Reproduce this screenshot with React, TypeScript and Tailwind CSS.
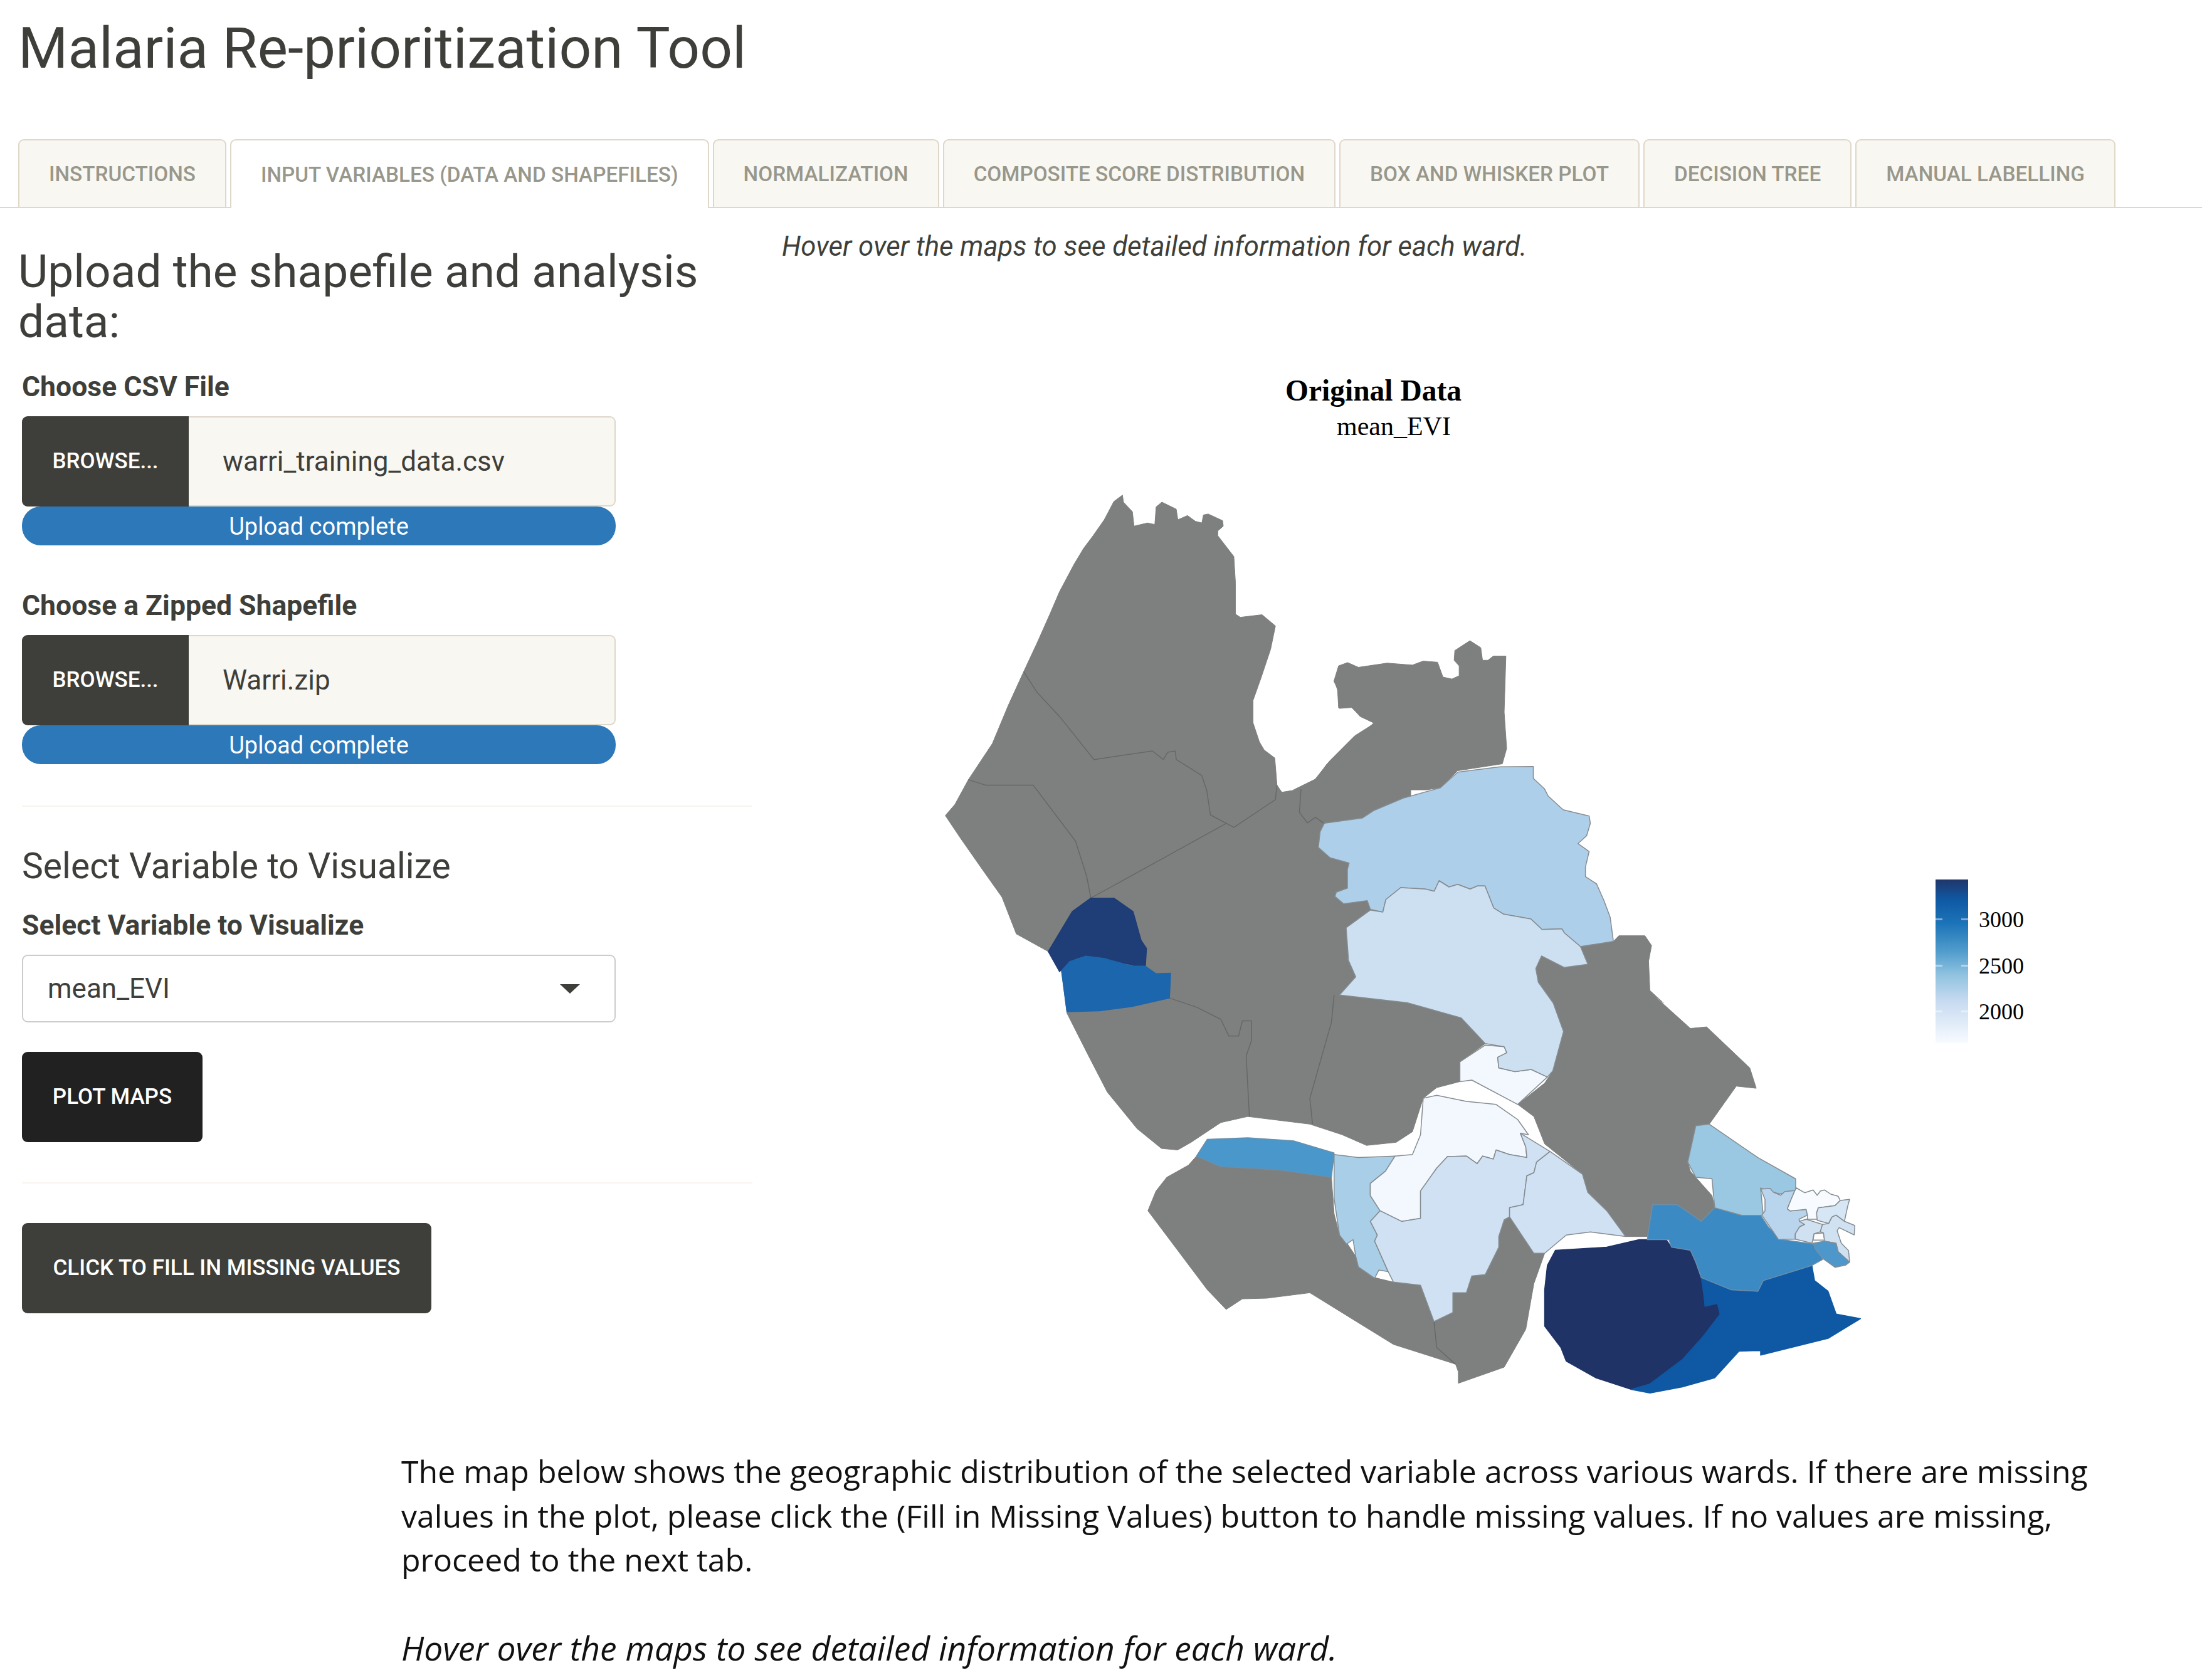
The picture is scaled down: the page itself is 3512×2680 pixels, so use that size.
const tabs = [
  "Instructions",
  "Input Variables (Data and Shapefiles)",
  "Normalization",
  "Composite Score Distribution",
  "Box and Whisker Plot",
  "Decision Tree",
  "Manual Labelling",
];

// each zoom crop of the map has its own origin and scale
type Frame = { x: number; y: number; sx: number; sy: number };
const N: Frame = { x: 1450, y: 750, sx: 1.96, sy: 1.96 };
const S: Frame = { x: 1650, y: 1500, sx: 1.1615, sy: 2.063 };
const E: Frame = { x: 2000, y: 560, sx: 1.742, sy: 2.24 };
const C: Frame = { x: 2060, y: 1200, sx: 2.529, sy: 3 };
const K: Frame = { x: 2760, y: 1870, sx: 3, sy: 3 };

function pts(...parts: [Frame, string][]) {
  return parts
    .map(([f, s]) =>
      s
        .trim()
        .split(/\s+/)
        .map((p) => {
          const [a, b] = p.split(",").map(Number);
          return `${(f.x + a / f.sx).toFixed(1)},${(f.y + b / f.sy).toFixed(1)}`;
        })
        .join(" ")
    )
    .join(" ");
}

const GRAY = "#7e807f";

const grayWards: [Frame, string][][] = [
  [[N, "667,78 670,100 698,130 703,175 745,165 768,170 772,115 790,100 835,122 840,155 870,142 895,160 915,165 920,140 935,137 980,158 982,175 965,190 965,205 1015,270 1020,350 1020,450 1035,460 1103,452 1145,487 1130,560 1100,650 1075,720 1075,790 1095,850 1110,875 1143,900 1150,985 1165,1007 1225,997 1270,970 1305,920 1370,855 1425,815 1453,790 1410,770 1385,742 1345,745 1340,690 1330,660 1345,615 1370,603 1405,618 1568,620 1568,1100 1380,1568 750,1568 435,1505 335,1450 290,1335 230,1250 160,1150 113,1080 143,1045 185,968 260,855 310,735 358,630 400,540 440,450 470,380 515,295 545,245 575,205 610,155 640,98"]],
  [[E, "235,1125 260,1113 290,1130 370,1115 440,1122 470,1108 510,1112 525,1165 550,1172 570,1160 570,1125 556,1105 558,1070 600,1035 630,1060 635,1105 650,1105 665,1090 700,1090 695,1290 702,1420 690,1475 565,1500 520,1560 480,1568 110,1568 170,1530 210,1465 280,1375 335,1330 295,1305 270,1272 235,1275 232,1205 222,1180"]],
  [[S, "27,0 600,0 580,60 595,120 565,180 690,205 790,255 835,340 788,400 788,465 745,485 720,520 700,630 670,665 615,675 570,640 510,605 395,580 345,600 290,665 265,690 235,685 190,620 135,500 100,380 60,240 50,100"]],
  [
    [C, "1165,930 1298,905 1320,878 1425,878 1452,925 1440,1000 1445,1140 1500,1200"],
    [S, "1140,170 1215,290 1245,285 1325,420 1337,487 1300,480 1250,605 1225,610 1210,730 1215,760 1255,840 1260,880 1235,925 1215,900 1190,870 1145,870 1135,975 1095,975 1060,890 1025,830 1015,770 945,670 925,580 895,540 945,470 960,430 980,300 960,206"],
    [C, "995,1100 985,1035 1008,975 1100,1030 1195,1015"],
  ],
  [[S, "300,710 345,745 450,755 550,780 555,900 565,970 580,1000 595,1040 600,1075 630,1110 665,1125 715,1135 740,1255 775,1225 775,1160 800,1160 810,1105 835,1100 860,1010 855,970 870,920 880,910 925,1030 945,1030 925,1130 910,1280 870,1405 785,1458 785,1420 780,1395 665,1330 510,1160 430,1178 385,1180 355,1215 320,1150 210,890 225,825 245,780 285,740"]],
];

// thin borders between the grey wards
const grayLines: [Frame, string][] = [
  [N, "358,630 400,695 470,770 578,905 760,878 795,905 808,882 832,878 835,905 915,955 930,1000 942,1078 1015,1117 1145,1030 1150,985"],
  [N, "185,968 240,985 388,985 520,1160 555,1270 568,1338"],
  [N, "568,1338 990,1105"],
  [N, "1225,997 1220,1070 1245,1103 1270,1085 1298,1105"],
  [S, "250,190 300,220 345,260 360,315 378,315 385,265 402,265 402,330 392,380 398,580"],
  [S, "555,180 550,270 510,520 515,605"],
  [S, "740,1255 745,1340 780,1395"],
];

const wards: { fill: string; stroke?: string; p: [Frame, string][] }[] = [
  { fill: "#1f3d76", stroke: "#1f3d76", p: [[N, "568,1338 640,1338 700,1380 725,1470 742,1495 738,1560 690,1545 560,1520 525,1525 490,1550 470,1568 435,1505 510,1380"]] },
  { fill: "#1c66ae", stroke: "#1c66ae", p: [[S, "50,100 65,70 95,52 130,60 180,85 205,85 225,110 252,108 250,190 180,218 120,232 60,235"]] },
  { fill: "#4a97cb", stroke: "#6b8fa8", p: [[S, "320,655 395,650 480,660 555,700 550,780 450,755 345,745 300,710"]] },
  { fill: "#a9cee8", p: [[S, "555,705 600,715 668,710 650,760 622,800 622,840 640,890 622,925 635,970 630,990 655,1090 638,1085 630,1112 600,1075 595,1040 590,985 578,1000 565,970 555,850"]] },
  { fill: "#f2f8fe", p: [[S, "720,520 745,510 800,530 855,540 895,590 915,640 900,635 910,680 912,715 880,705 855,690 850,720 830,710 820,735 800,710 765,712 745,750 715,825 715,915 680,925 640,890 622,840 622,800 650,760 668,710 700,705 715,640"]] },
  { fill: "#cfe1f3", p: [[S, "765,712 800,710 820,735 830,710 850,720 855,690 880,705 912,715 910,680 900,635 955,695 930,730 925,765 912,775 905,870 880,880 880,910 870,920 860,975 860,1010 835,1100 810,1105 800,1160 775,1160 775,1225 740,1255 715,1135 665,1125 655,1090 630,990 635,970 622,925 640,890 680,925 715,915 715,825 745,750"]] },
  { fill: "#cfe1f3", p: [[S, "955,695 1015,770 1025,830 1060,890 1095,975 1030,960 985,970 945,1030 925,1030 880,910 880,880 905,870 912,775 925,765 930,730"]] },
  { fill: "#f2f8fe", p: [[S, "835,345 870,350 875,370 858,385 860,420 890,432 920,425 950,450 895,540 810,460 788,465 788,400"]] },
  { fill: "#aecfe9", p: [[C, "132,340 285,315 330,280 450,220 600,170 670,95 840,70 975,68 975,125 1020,175 1035,210 1095,275 1200,305 1205,340 1190,400 1155,437 1200,475 1185,550 1185,595 1230,630 1260,710 1285,790 1298,905 1165,930 1100,865 1090,845 1010,848 965,798 855,775 815,745 780,640 750,640 720,655 670,632 635,645 595,615 575,665 540,655 440,648 380,705 368,765 318,752 305,710 210,725 175,690 180,670 225,650 225,560 232,530 155,505 108,455 115,380"]] },
  {
    fill: "#cde0f2",
    p: [
      [C, "318,755 368,765 380,705 440,648 540,655 575,665 595,615 635,645 670,632 720,655 750,640 780,640 815,745 855,775 965,798 1010,848 1090,845 1100,865 1165,930 1195,1015 1100,1030 1008,975 985,1035 995,1100 1055,1200"],
      [S, "980,300 960,430 950,450 920,425 890,432 860,420 858,385 875,370 870,350 835,340 790,255 690,205 565,180 595,120 580,60"],
      [C, "258,1075 230,1000 220,840"],
    ],
  },
  { fill: "#1f3366", stroke: "#1f3366", p: [[S, "965,1020 1060,1010 1120,985 1170,985 1180,1010 1215,1020 1228,1065 1235,1110 1242,1190 1265,1195 1270,1230 1240,1300 1200,1380 1140,1460 1105,1478 1040,1440 985,1385 975,1340 945,1270 945,1150 950,1070"]] },
  { fill: "#0f58a3", stroke: "#0f58a3", p: [[S, "1235,1110 1290,1150 1340,1155 1350,1120 1440,1070 1445,1120 1470,1155 1485,1230 1530,1245 1470,1310 1345,1365 1345,1350 1305,1352 1260,1440 1200,1470 1140,1490 1105,1478 1140,1460 1200,1380 1240,1300 1270,1230 1265,1195 1242,1205 1240,1170"]] },
  { fill: "#3b8ac4", stroke: "#6d8ea8", p: [[S, "1135,985 1145,870 1190,870 1215,900 1235,925 1260,880 1310,905 1345,905 1360,945 1385,985 1445,1000 1460,1050 1440,1070 1350,1120 1340,1155 1290,1150 1235,1110 1225,1060 1215,1020 1180,1010 1175,985"]] },
  { fill: "#9ac7e1", p: [[S, "1225,610 1250,605 1340,715 1410,785 1410,825 1380,835 1345,815 1350,905 1310,905 1260,880 1255,785 1225,780 1210,730"]] },
  { fill: "#b9d5ee", p: [[K, "145,80 190,78 205,95 240,110 260,92 308,88 290,130 272,175 285,185 362,178 368,205 328,225 330,235 362,235 355,250 330,262 310,295 310,320 230,322 150,205 165,185 165,130"]] },
  { fill: "#f7fbff", p: [[K, "308,88 315,75 355,98 395,85 415,110 430,90 450,85 480,105 515,115 525,135 500,160 420,170 412,195 418,225 368,225 368,205 362,178 285,185 272,175 290,130"]] },
  { fill: "#d6e6f5", p: [[K, "420,170 500,160 525,135 570,130 560,165 545,235 505,205 485,215 470,245 415,230 412,195"]] },
  { fill: "#d0e1f2", p: [[K, "330,235 362,225 440,250 430,285 400,295 390,340 310,320 310,295 330,262 355,250"]] },
  { fill: "#ffffff", p: [[K, "400,295 445,290 450,325 395,325"]] },
  { fill: "#d0e1f2", p: [[K, "470,245 485,215 505,205 545,235 595,255 592,300 520,265 510,280 530,340 565,375 570,430 515,380 505,340 450,330 445,290 430,285 440,250"]] },
  { fill: "#4e97cb", p: [[K, "395,340 450,330 505,340 515,380 570,430 550,445 500,455 445,415 410,375"]] },
];

function WardMap() {
  return (
    <svg viewBox="1247 418 2265 1894" width={2265} height={1894} className="ml-[29px] block">
      <defs>
        <linearGradient id="evi" x1="0" y1="0" x2="0" y2="1">
          <stop offset="0" stopColor="#213669" />
          <stop offset="0.12" stopColor="#0f58a3" />
          <stop offset="0.27" stopColor="#1c74b8" />
          <stop offset="0.45" stopColor="#559fce" />
          <stop offset="0.58" stopColor="#8fc2e0" />
          <stop offset="0.74" stopColor="#c6daf0" />
          <stop offset="1" stopColor="#f8fbff" />
        </linearGradient>
      </defs>

      <text x={2050} y={639} fontFamily="'Liberation Serif',serif" fontWeight={700} fontSize={47.5} fill="#000">
        Original Data
      </text>
      <text x={2132} y={694} fontFamily="'Liberation Serif',serif" fontSize={42} fill="#000">
        mean_EVI
      </text>

      {grayWards.map((p, i) => (
        <polygon key={i} points={pts(...p)} fill={GRAY} stroke={GRAY} strokeWidth={1} strokeLinejoin="round" />
      ))}
      {grayLines.map((l, i) => (
        <polyline key={i} points={pts(l)} fill="none" stroke="#666867" strokeWidth={1.5} strokeLinejoin="round" />
      ))}
      {wards.map((w, i) => (
        <polygon key={i} points={pts(...w.p)} fill={w.fill} stroke={w.stroke ?? "#858c90"} strokeWidth={1.5} strokeLinejoin="round" />
      ))}

      <rect x={3087} y={1403} width={52} height={261} fill="url(#evi)" />
      {[1466, 1540, 1613].map((y) => (
        <g key={y} fill="#ffffff" fillOpacity={0.45}>
          <rect x={3087} y={y - 1} width={11} height={3} />
          <rect x={3128} y={y - 1} width={11} height={3} />
        </g>
      ))}
      {[
        ["3000", 1479],
        ["2500", 1553],
        ["2000", 1626],
      ].map(([t, y]) => (
        <text key={t} x={3156} y={y} fontFamily="'Liberation Serif',serif" fontSize={36} fill="#000">
          {t}
        </text>
      ))}
    </svg>
  );
}

function FileInput({ name }: { name: string }) {
  return (
    <div className="ml-[6px] w-[947px]">
      <div className="flex h-[144px]">
        <div className="flex w-[266px] items-center justify-center rounded-l-[9px] bg-[#3e3f3a] text-[35px] font-medium text-white">
          BROWSE...
        </div>
        <div className="flex flex-1 items-center rounded-r-[9px] border-2 border-l-0 border-[#dfd7ca] bg-[#f9f7f2] pl-[54px] text-[44px] text-[#3e3f3a]">
          {name}
        </div>
      </div>
      <div className="flex h-[62px] items-center justify-center rounded-[30px] bg-[#2c78b9] pt-[2px] text-[38px] text-white">
        Upload complete
      </div>
    </div>
  );
}

export default function App() {
  return (
    <div className="h-[2680px] w-[3512px] overflow-hidden bg-white font-['Roboto',sans-serif] text-[#3e3f3a]">
      <h1 className="mb-[100px] ml-[29px] pt-[32px] text-[91px] leading-[90px]">Malaria Re-prioritization Tool</h1>

      <div className="flex border-b-2 border-[#dfd7ca] pl-[29px]">
        {tabs.map((t, i) => (
          <div
            key={t}
            className={
              i === 1
                ? "-mb-[2px] mr-[6px] flex h-[110px] items-center rounded-t-[9px] border-2 border-b-0 border-[#dfd7ca] bg-white px-[47px] pt-[2px] text-[33.3px] font-medium uppercase text-[#98978b]"
                : "mr-[6px] flex h-[108px] items-center rounded-t-[9px] border-2 border-b-0 border-[#dfd7ca] bg-[#f9f7f2] px-[47px] pt-[2px] text-[33.3px] font-medium uppercase text-[#98978b]"
            }
          >
            {t}
          </div>
        ))}
      </div>

      <div className="flex">
        <div className="w-[1218px] shrink-0 pl-[29px]">
          <h3 className="mt-[61px] text-[73px] leading-[80px]">Upload the shapefile and analysis data:</h3>

          <div className="ml-[6px] mt-[39px] text-[44.5px] font-bold leading-[50px]">Choose CSV File</div>
          <div className="mt-[22px]">
            <FileInput name="warri_training_data.csv" />
          </div>

          <div className="ml-[6px] mt-[71px] text-[44.5px] font-bold leading-[50px]">Choose a Zipped Shapefile</div>
          <div className="mt-[22px]">
            <FileInput name="Warri.zip" />
          </div>

          <hr className="ml-[6px] mr-[18px] mt-[66px] border-t-2 border-[#f8f5f0]" />

          <div className="ml-[6px] mt-[60px] text-[57px] leading-[70px]">Select Variable to Visualize</div>
          <div className="ml-[6px] mt-[34px] text-[44.5px] font-bold leading-[50px]">Select Variable to Visualize</div>

          <div className="ml-[6px] mt-[22px] flex h-[108px] w-[947px] items-center justify-between rounded-[9px] border-2 border-[#cccccc] pl-[39px] pr-[55px] text-[44px]">
            mean_EVI
            <svg width="32" height="15" viewBox="0 0 32 15">
              <path d="M0 0h32L16 15z" fill="#3e3f3a" />
            </svg>
          </div>

          <button className="ml-[6px] mt-[47px] block h-[144px] w-[288px] rounded-[9px] bg-[#212121] text-center text-[35px] font-medium text-white">
            PLOT MAPS
          </button>

          <hr className="ml-[6px] mr-[18px] mt-[64px] border-t-2 border-[#f8f5f0]" />

          <button className="ml-[6px] mt-[63px] block h-[144px] w-[653px] rounded-[9px] bg-[#3e3f3a] text-center text-[35px] font-medium text-white">
            CLICK TO FILL IN MISSING VALUES
          </button>
        </div>

        <div className="flex-1">
          <p className="ml-[29px] mt-[36px] text-[43.75px] italic leading-[50px]">
            Hover over the maps to see detailed information for each ward.
          </p>
          <WardMap />
        </div>
      </div>

      <div className="w-[3380px] pl-[640px] font-['Open_Sans',sans-serif] text-[50px] leading-[70.5px] text-[#111111]">
        <p>
          The map below shows the geographic distribution of the selected variable across various wards. If there are
          missing values in the plot, please click the (Fill in Missing Values) button to handle missing values. If no
          values are missing, proceed to the next tab.
        </p>
        <p className="mt-[70px] text-[53.4px] italic">Hover over the maps to see detailed information for each ward.</p>
      </div>
    </div>
  );
}
